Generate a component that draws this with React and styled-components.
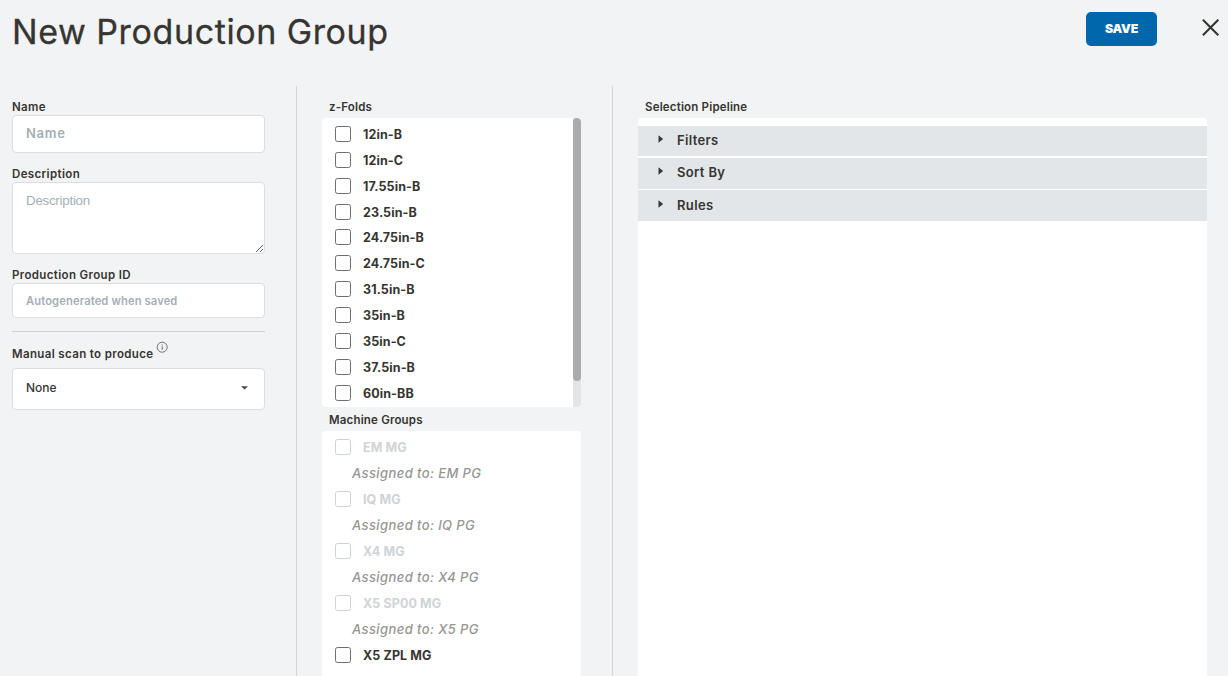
import React from "react";
import styled, { createGlobalStyle } from "styled-components";

const Global = createGlobalStyle`
  *, *::before, *::after { box-sizing: border-box; }
  html, body, #root { height: 100%; }
  body {
    margin: 0;
    overflow: hidden;
    background: #f2f3f5;
    color: #363531;
    font-family: Inter, "Liberation Sans", sans-serif;
  }
`;

const Page = styled.div`
  height: 100%;
  display: flex;
  flex-direction: column;
`;

const Header = styled.header`
  flex: 0 0 86px;
  display: flex;
  align-items: flex-start;
  padding: 12px 8px 0 12px;
`;

const Title = styled.h1`
  margin: 0 auto 0 0;
  font-size: 34px;
  font-weight: 400;
  line-height: 40px;
  letter-spacing: 0.63px;
  word-spacing: -0.5px;
  -webkit-text-stroke: 0.3px currentColor;
  white-space: nowrap;
`;

const SaveButton = styled.button`
  width: 71px;
  height: 34px;
  margin-right: 45px;
  padding: 0;
  border: 0;
  border-radius: 5px;
  background: #0067ac;
  color: #fff;
  font: 900 12.3px/34px Inter, sans-serif;
  letter-spacing: -0.2px;
`;

const CloseButton = styled.button`
  display: flex;
  margin-top: 6px;
  padding: 0;
  border: 0;
  background: none;
  color: #363531;
`;

const Columns = styled.main`
  flex: 1;
  min-height: 0;
  display: flex;
`;

const FormColumn = styled.section`
  flex: 0 0 297px;
  display: flex;
  flex-direction: column;
  padding: 13px 31px 0 12px;
  border-right: 1px solid #d3d6d8;
`;

const GroupsColumn = styled.section`
  flex: 0 0 316px;
  display: flex;
  flex-direction: column;
  padding: 13px 31px 0 25px;
  border-right: 1px solid #d3d6d8;
`;

const PipelineColumn = styled.section`
  flex: 1;
  display: flex;
  flex-direction: column;
  padding: 13px 21px 0 25px;
`;

const Label = styled.label`
  display: block;
  flex: none;
  height: 16px;
  font-size: 11.5px;
  font-weight: 600;
  line-height: 16px;
  letter-spacing: 0.36px;
  white-space: nowrap;
`;

const PanelLabel = styled(Label)`
  height: ${(p) => (p.$spaced ? 24 : 19)}px;
  padding: ${(p) => (p.$spaced ? 5 : 0)}px 0 0 7px;
  letter-spacing: 0.18px;
`;

const Input = styled.input`
  flex: none;
  width: 100%;
  height: ${(p) => p.$height}px;
  margin-bottom: 13px;
  padding: 0 13px ${(p) => p.$lift || 0}px;
  border: 1px solid #dcdddd;
  border-radius: 4px;
  background: #fff;
  font: 600 ${(p) => p.$size}px Inter, sans-serif;
  letter-spacing: ${(p) => p.$track || 0}px;
  &::placeholder { color: #a4afb6; opacity: 1; }
`;

const TextArea = styled.textarea`
  flex: none;
  width: 100%;
  height: 72px;
  margin: 0 0 13px;
  padding: 10px 13px;
  border: 1px solid #dcdddd;
  border-radius: 4px;
  background: #fff;
  font: 13.33px/16px "Liberation Sans", sans-serif;
  letter-spacing: -0.25px;
  resize: vertical;
  &::placeholder { color: #a4afb6; opacity: 1; }
`;

const Rule = styled.hr`
  flex: none;
  width: 100%;
  height: 1px;
  margin: 0 0 9px;
  border: 0;
  background: #d0d3d5;
`;

const ScanLabel = styled.div`
  flex: none;
  height: 27px;
  display: flex;
  align-items: flex-start;
  gap: 3px;
  & > label { margin-top: 5px; }
`;

const Select = styled.div`
  flex: none;
  height: 42px;
  display: flex;
  align-items: center;
  justify-content: space-between;
  padding: 0 15px 3px 13px;
  border: 1px solid #dcdddd;
  border-radius: 4px;
  background: #fff;
  font-size: 12px;
  font-weight: 500;
`;

const Panel = styled.div`
  flex: ${(p) => (p.$height ? `0 0 ${p.$height}px` : "1")};
  min-height: 0;
  display: flex;
  background: #fff;
  border-radius: ${(p) => (p.$height ? "4px" : "4px 4px 0 0")};
  overflow: hidden;
`;

const OptionList = styled.div`
  flex: 1;
  padding: 3px 0 0 13px;
`;

const Option = styled.label`
  height: ${(p) => p.$pitch}px;
  display: flex;
  align-items: center;
  gap: 12px;
  color: ${(p) => (p.$disabled ? "#ced4d8" : "#363531")};
  font-size: 12.5px;
  font-weight: 700;
  letter-spacing: 0.1px;
  white-space: nowrap;
`;

const OptionName = styled.span`
  padding-top: ${(p) => p.$drop || 0}px;
`;

const Box = styled.span`
  width: 16px;
  height: 16px;
  border: 1px solid ${(p) => (p.$disabled ? "#cdd3d7" : "#6f6f6f")};
  border-radius: 2.5px;
  background: #fff;
`;

const Assigned = styled.div`
  height: 26px;
  padding-left: 17px;
  color: #969693;
  font-size: 13px;
  font-style: italic;
  font-weight: 500;
  line-height: 26px;
  letter-spacing: 0.4px;
  white-space: nowrap;
`;

const ScrollTrack = styled.div`
  flex: 0 0 8px;
  background: #e4e4e4;
`;

const ScrollThumb = styled.div`
  height: 263px;
  border-radius: 4px;
  background: #ababab;
`;

const Pipeline = styled.div`
  flex: 1;
  padding-top: 8px;
`;

const PipelineRow = styled.div`
  height: ${(p) => p.$height}px;
  margin-bottom: ${(p) => p.$gap}px;
  display: flex;
  align-items: center;
  gap: 13px;
  padding: 0 0 ${(p) => p.$lift}px 20px;
  background: #e2e6e9;
  font-size: 13px;
  font-weight: 600;
  letter-spacing: 0.36px;
  & > svg { margin-bottom: 2px; }
`;

const folds = ["12in-B", "12in-C", "17.55in-B", "23.5in-B", "24.75in-B", "24.75in-C", "31.5in-B", "35in-B", "35in-C", "37.5in-B", "60in-BB"];

const machines = [
  { name: "EM MG", owner: "EM PG" },
  { name: "IQ MG", owner: "IQ PG" },
  { name: "X4 MG", owner: "X4 PG" },
  { name: "X5 SP00 MG", owner: "X5 PG" },
  { name: "X5 ZPL MG" },
];

const stages = [
  { name: "Filters", height: 30, gap: 2, lift: 2 },
  { name: "Sort By", height: 31, gap: 1, lift: 3 },
  { name: "Rules", height: 31, gap: 0, lift: 1 },
];

const CloseIcon = () => (
  <svg width="18" height="19" viewBox="0 0 18 19" fill="none" stroke="currentColor" strokeWidth="2.1">
    <path d="M.9 1.8 16.3 17.2M16.3 1.8 .9 17.2" />
  </svg>
);

const InfoIcon = () => (
  <svg width="12" height="12" viewBox="0 0 12 12" fill="none" stroke="#62625f">
    <circle cx="6.2" cy="6.2" r="5" strokeWidth="0.9" />
    <path d="M6.2 5.4V8.7M6.2 3.5V4.5" />
  </svg>
);

const CaretDown = () => (
  <svg width="9" height="5" viewBox="0 0 9 5" fill="#4a4a47">
    <path d="M1 1.2h7L4.5 4.6z" />
  </svg>
);

const CaretRight = () => (
  <svg width="6" height="8" viewBox="0 0 6 8" fill="#363531">
    <path d="M.5.2 5.1 4 .5 7.8z" />
  </svg>
);

export default function App() {
  return (
    <Page>
      <Global />
      <Header>
        <Title>New Production Group</Title>
        <SaveButton>SAVE</SaveButton>
        <CloseButton aria-label="Close"><CloseIcon /></CloseButton>
      </Header>
      <Columns>
        <FormColumn>
          <Label>Name</Label>
          <Input $height={38} $size={13} $track={0.7} $lift={2} placeholder="Name" />
          <Label>Description</Label>
          <TextArea placeholder="Description" />
          <Label>Production Group ID</Label>
          <Input $height={35} $size={11.2} $track={0.12} placeholder="Autogenerated when saved" />
          <Rule />
          <ScanLabel>
            <Label>Manual scan to produce</Label>
            <InfoIcon />
          </ScanLabel>
          <Select>None<CaretDown /></Select>
        </FormColumn>
        <GroupsColumn>
          <PanelLabel>z-Folds</PanelLabel>
          <Panel $height={289}>
            <OptionList>
              {folds.map((name) => (
                <Option key={name} $pitch={25.88}><Box /><OptionName $drop={1}>{name}</OptionName></Option>
              ))}
            </OptionList>
            <ScrollTrack><ScrollThumb /></ScrollTrack>
          </Panel>
          <PanelLabel $spaced>Machine Groups</PanelLabel>
          <Panel>
            <OptionList>
              {machines.map(({ name, owner }) => (
                <React.Fragment key={name}>
                  <Option $pitch={26} $disabled={!!owner}><Box $disabled={!!owner} /><OptionName>{name}</OptionName></Option>
                  {owner && <Assigned>Assigned to: {owner}</Assigned>}
                </React.Fragment>
              ))}
            </OptionList>
          </Panel>
        </GroupsColumn>
        <PipelineColumn>
          <PanelLabel>Selection Pipeline</PanelLabel>
          <Panel>
            <Pipeline>
              {stages.map((s) => (
                <PipelineRow key={s.name} $height={s.height} $gap={s.gap} $lift={s.lift}><CaretRight />{s.name}</PipelineRow>
              ))}
            </Pipeline>
          </Panel>
        </PipelineColumn>
      </Columns>
    </Page>
  );
}
